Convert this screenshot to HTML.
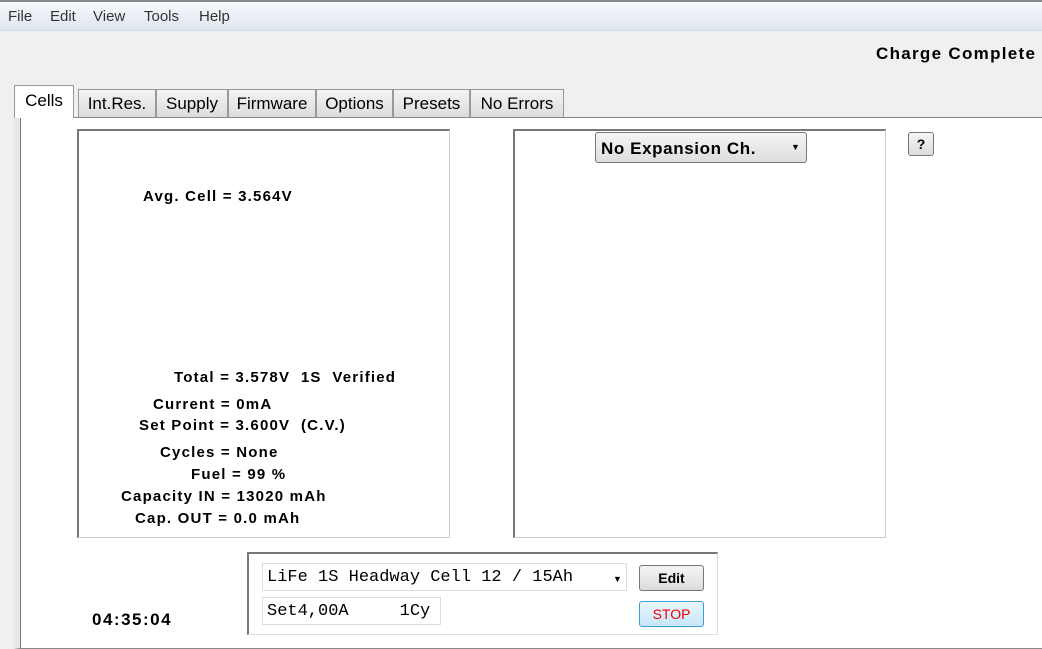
<!DOCTYPE html>
<html><head><style>
body{margin:0;width:1042px;height:642px;overflow:hidden;background:#f0f0f0;font-family:"Liberation Sans",Arial,sans-serif;position:relative}
.a{position:absolute}
.menu{left:0;top:0;width:1042px;height:28px;background:linear-gradient(#f6f8fb,#dfe6f0);border-top:2px solid #888;border-bottom:1px solid #d0d7e2}
.menu span{position:absolute;top:6px;font-size:15px;color:#333}
.tab{position:absolute;top:89px;height:27px;border:1px solid #999;border-bottom:none;background:linear-gradient(#f4f4f4,#dcdcdc);font-size:17px;line-height:27px;text-align:center;color:#000}
.b{font-weight:bold;font-size:15px;color:#000;white-space:nowrap;letter-spacing:1.2px}
</style></head><body>
<div class="a menu"><span style="left:8px">File</span><span style="left:50px">Edit</span><span style="left:93px">View</span><span style="left:144px">Tools</span><span style="left:199px">Help</span></div>
<div class="a b" style="left:876px;top:44px;font-size:17px;letter-spacing:1.3px">Charge Complete</div>
<div class="a" style="left:14px;top:117px;width:1040px;height:530px;background:#fff;border:1px solid #888;border-left:6px solid #e8e8e8;box-shadow:inset 1px 0 0 #777"></div>
<div class="tab" style="left:14px;top:85px;height:32px;width:58px;background:#fff;border-bottom:none;line-height:30px">Cells</div>
<div class="tab" style="left:78px;width:76px">Int.Res.</div>
<div class="tab" style="left:156px;width:70px">Supply</div>
<div class="tab" style="left:228px;width:86px">Firmware</div>
<div class="tab" style="left:316px;width:75px">Options</div>
<div class="tab" style="left:393px;width:75px">Presets</div>
<div class="tab" style="left:470px;width:92px">No Errors</div>
<div class="a" style="left:77px;top:129px;width:370px;height:406px;border:1px solid #ccc;border-left:2px solid #777;border-top:2px solid #777;background:#fff"></div>
<div class="a" style="left:513px;top:129px;width:370px;height:406px;border:1px solid #ccc;border-left:2px solid #777;border-top:2px solid #777;background:#fff"></div>
<div class="a b" style="left:143px;top:188px">Avg. Cell = 3.564V</div>
<div class="a b" style="left:174px;top:369px">Total = 3.578V&nbsp; 1S&nbsp; Verified</div>
<div class="a b" style="left:153px;top:396px">Current = 0mA</div>
<div class="a b" style="left:139px;top:417px">Set Point = 3.600V&nbsp; (C.V.)</div>
<div class="a b" style="left:160px;top:444px">Cycles = None</div>
<div class="a b" style="left:191px;top:466px">Fuel = 99 %</div>
<div class="a b" style="left:121px;top:488px">Capacity IN = 13020 mAh</div>
<div class="a b" style="left:135px;top:510px">Cap. OUT = 0.0 mAh</div>
<div class="a" style="left:595px;top:132px;width:210px;height:29px;border:1px solid #777;border-radius:3px;background:linear-gradient(#f5f5f5,#dedede)"><span class="a b" style="left:5px;top:6px;font-size:17px;letter-spacing:0.6px">No Expansion Ch.</span><span class="a" style="left:195px;top:9px;font-size:9px">▼</span></div>
<div class="a" style="left:908px;top:132px;width:24px;height:22px;border:1px solid #777;border-radius:3px;background:linear-gradient(#f5f5f5,#dcdcdc);text-align:center;line-height:22px;font-weight:bold;font-size:14px">?</div>
<div class="a b" style="left:92px;top:610px;font-size:17px;letter-spacing:1.5px">04:35:04</div>
<div class="a" style="left:247px;top:552px;width:468px;height:80px;border:1px solid #ddd;border-left:2px solid #777;border-top:2px solid #777;background:#fff"></div>
<div class="a" style="left:262px;top:563px;width:365px;height:28px;border:1px solid #ddd;background:#fff;font-family:'Liberation Mono',monospace;font-size:17px;line-height:28px;padding-left:4px;box-sizing:border-box;white-space:nowrap">LiFe 1S Headway Cell 12 / 15Ah<span class="a" style="left:350px;top:1px;font-size:9px;font-family:'Liberation Sans'">▼</span></div>
<div class="a" style="left:262px;top:597px;width:179px;height:28px;border:1px solid #ddd;font-family:'Liberation Mono',monospace;font-size:17px;line-height:28px;padding-left:4px;box-sizing:border-box;white-space:nowrap">Set4,00A&nbsp;&nbsp;&nbsp;&nbsp; 1Cy</div>
<div class="a" style="left:639px;top:565px;width:63px;height:24px;border:1px solid #777;border-radius:3px;background:linear-gradient(#f5f5f5,#dcdcdc);text-align:center;line-height:24px;font-weight:bold;font-size:14px">Edit</div>
<div class="a" style="left:639px;top:601px;width:63px;height:24px;border:1px solid #3c9fd8;border-radius:3px;background:linear-gradient(#eaf6fd,#c8e6f8);text-align:center;line-height:24px;font-size:14px;color:#e00">STOP</div>
</body></html>
